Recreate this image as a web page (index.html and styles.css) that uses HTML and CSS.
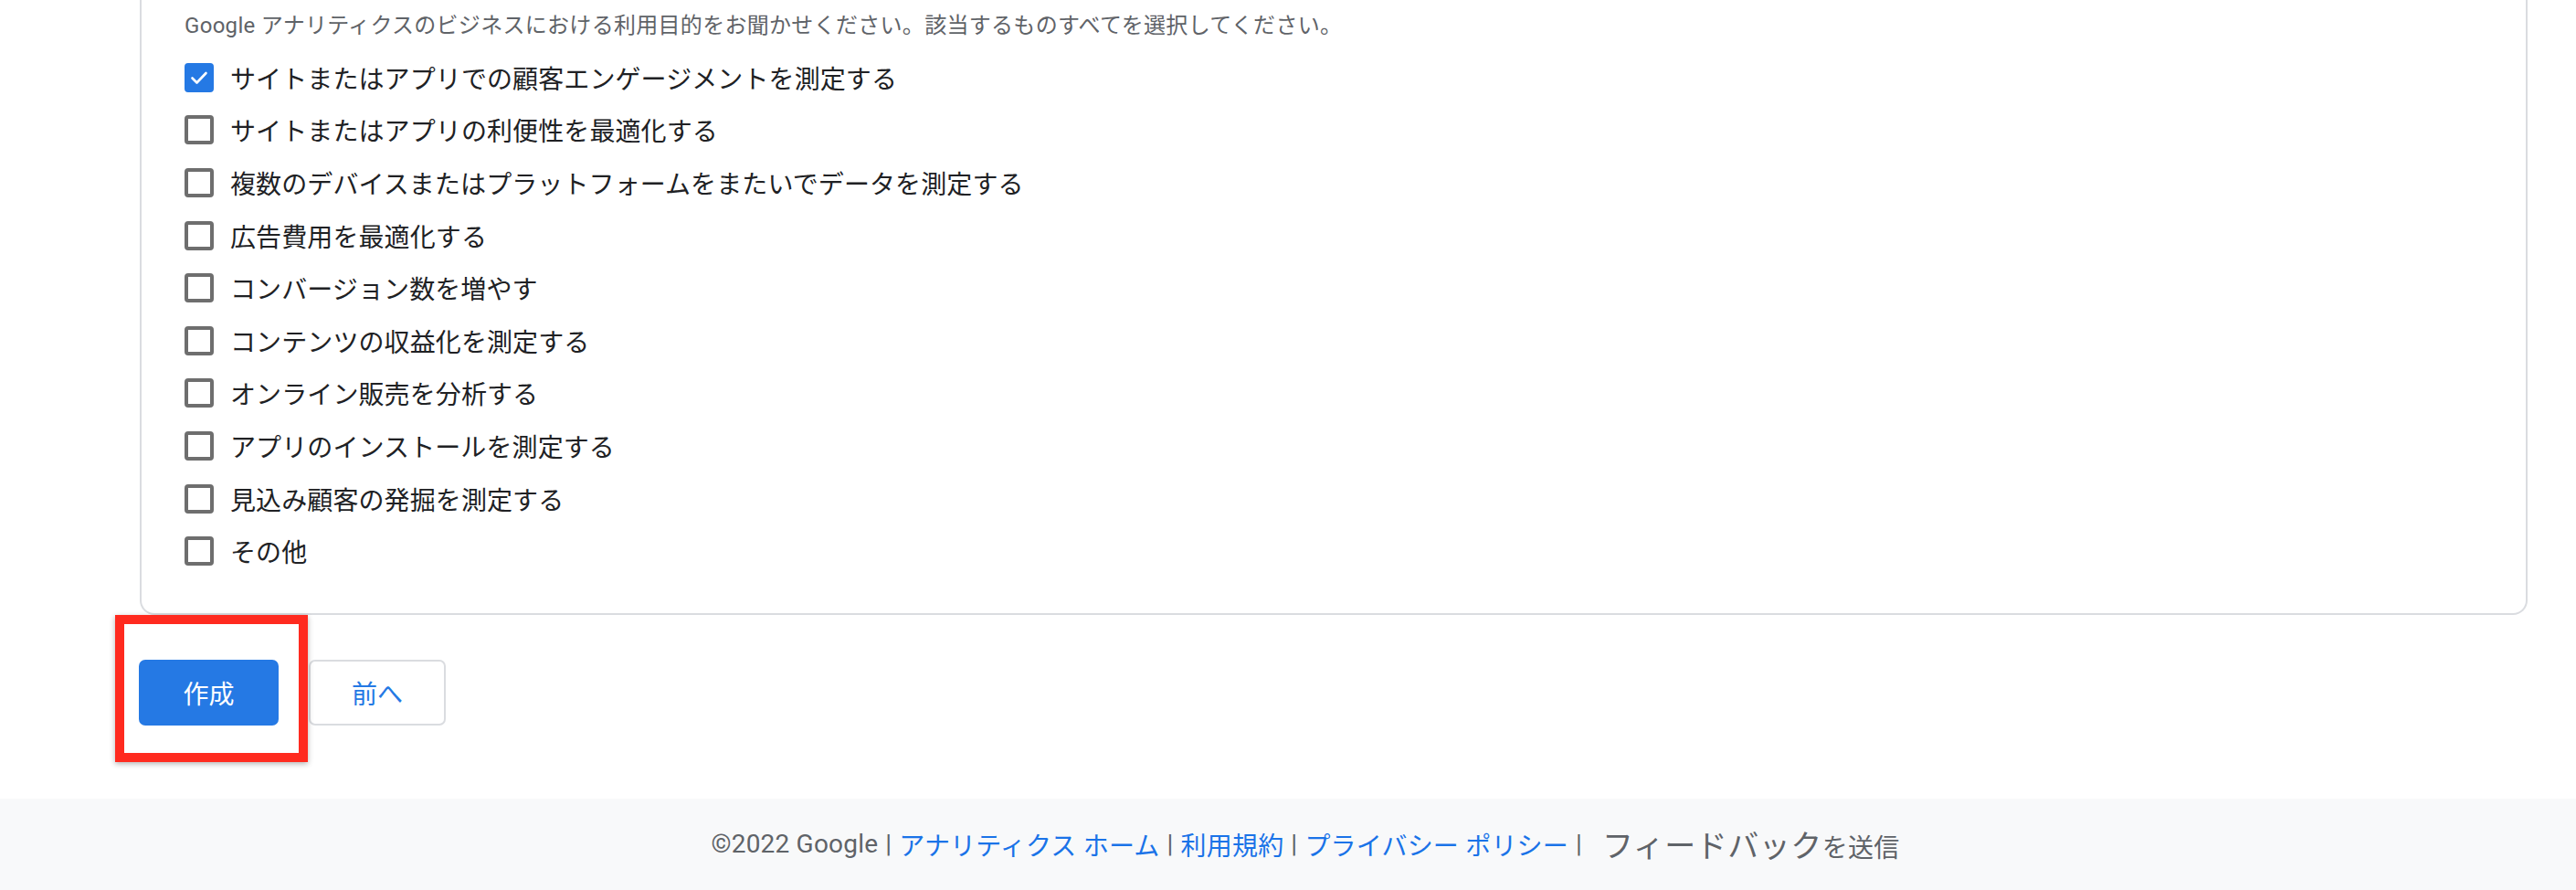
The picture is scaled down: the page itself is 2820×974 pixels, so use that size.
FILE: index.html
```html
<!DOCTYPE html>
<html lang="ja">

<head>
    <meta charset="UTF-8">
    <meta name="viewport" content="width=device-width, initial-scale=1.0">
    <title>プロパティの作成</title>
    <link rel="stylesheet" href="styles.css">
</head>

<body>
    <div class="main">
        <div class="card">
            <p class="desc">Google アナリティクスのビジネスにおける利用目的をお聞かせください。該当するものすべてを選択してください。</p>
            <ul class="options">
                <li class="option">
                    <span class="box checked">
                        <svg viewBox="0 0 24 24" width="26" height="26"><path d="M4.5 12.5l5 5 10-10.5" fill="none" stroke="#fff" stroke-width="2.6" stroke-linecap="round" stroke-linejoin="round"/></svg>
                    </span>
                    <span class="label">サイトまたはアプリでの顧客エンゲージメントを測定する</span>
                </li>
                <li class="option"><span class="box"></span><span class="label">サイトまたはアプリの利便性を最適化する</span></li>
                <li class="option"><span class="box"></span><span class="label">複数のデバイスまたはプラットフォームをまたいでデータを測定する</span></li>
                <li class="option"><span class="box"></span><span class="label">広告費用を最適化する</span></li>
                <li class="option"><span class="box"></span><span class="label">コンバージョン数を増やす</span></li>
                <li class="option"><span class="box"></span><span class="label">コンテンツの収益化を測定する</span></li>
                <li class="option"><span class="box"></span><span class="label">オンライン販売を分析する</span></li>
                <li class="option"><span class="box"></span><span class="label">アプリのインストールを測定する</span></li>
                <li class="option"><span class="box"></span><span class="label">見込み顧客の発掘を測定する</span></li>
                <li class="option"><span class="box"></span><span class="label">その他</span></li>
            </ul>
        </div>

        <div class="actions">
            <button class="btn btn-primary">作成</button>
            <button class="btn btn-secondary">前へ</button>
            <div class="highlight"></div>
        </div>
    </div>

    <div class="footer">
        <span>©2022 Google</span>
        <span class="sep">|</span>
        <a href="#">アナリティクス ホーム</a>
        <span class="sep">|</span>
        <a href="#">利用規約</a>
        <span class="sep">|</span>
        <a href="#">プライバシー ポリシー</a>
        <span class="sep">|</span>
        <span class="feedback"><span class="big">フィードバック</span>を送信</span>
    </div>
</body>

</html>
```

FILE: styles.css
```css
* {
    font-family: Roboto, "Noto Sans CJK JP", sans-serif;
    box-sizing: border-box;
}

body {
    margin: 0;
    background-color: #fff;
    color: #202124;
}

.main {
    padding: 0 53px 80px 153px;
}

.card {
    border: 2px solid #dadce0;
    border-top: none;
    border-radius: 0 0 16px 16px;
    padding: 10px 48px 39px 47px;
}

.desc {
    margin: 0 0 10px 0;
    font-size: 24px;
    line-height: 36px;
    letter-spacing: 0.3px;
    color: #5f6368;
}

.options {
    list-style: none;
    margin: 0;
    padding: 0;
}

.option {
    height: 57.6px;
    display: flex;
    align-items: center;
    gap: 18px;
}

.box {
    width: 32px;
    height: 32px;
    border: 4px solid #6e6e6e;
    border-radius: 4px;
    display: flex;
    align-items: center;
    justify-content: center;
    flex-shrink: 0;
}

.box.checked {
    background-color: #2579e4;
    border-color: #2579e4;
}

.label {
    font-size: 28px;
    letter-spacing: 0.1px;
    color: #202124;
}

.actions {
    position: relative;
    margin-top: 49px;
    margin-left: -1px;
    display: flex;
    gap: 33px;
}

.btn {
    height: 72px;
    border-radius: 7px;
    font-size: 28px;
    cursor: pointer;
}

.btn-primary {
    width: 153px;
    background-color: #2579e4;
    color: #fff;
    border: none;
}

.btn-secondary {
    width: 150px;
    background-color: #fff;
    color: #2579e4;
    border: 2px solid #dadce0;
}

/* annotation box round the create button */
.highlight {
    position: absolute;
    left: -26px;
    top: -49px;
    width: 211px;
    height: 161px;
    border: 10px solid #ff2a1f;
    box-shadow: 0 2px 6px rgba(0, 0, 0, 0.3);
}

.footer {
    height: 100px;
    background-color: #f8f9fa;
    display: flex;
    align-items: center;
    justify-content: center;
    gap: 8px;
    font-size: 28px;
    letter-spacing: 0.2px;
    color: #5f6368;
    padding-left: 38px;
}

.footer a {
    color: #1a73e8;
    text-decoration: none;
}

.footer .sep {
    color: #5f6368;
}

.feedback {
    margin-left: 14px;
}

.feedback .big {
    font-size: 34px;
    letter-spacing: 0.5px;
}
```
